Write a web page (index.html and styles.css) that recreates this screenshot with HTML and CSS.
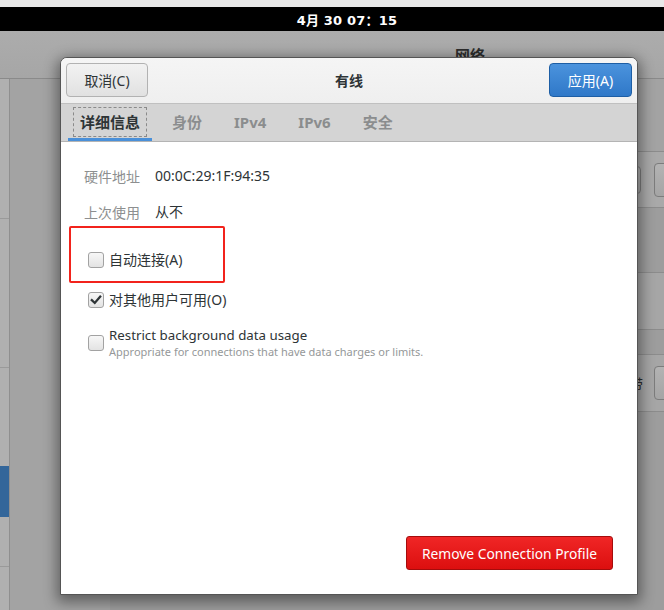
FILE: index.html
```html
<!DOCTYPE html>
<html lang="zh">
<head>
<meta charset="utf-8">
<title>有线</title>
<link rel="stylesheet" href="styles.css">
</head>
<body>
<div class="screen">
  <div class="topstrip"></div>
  <div class="topbar"><span class="clock">4月 30 07：15</span></div>
  <div class="bgwin">
    <div class="bg-header"><span class="bg-title">网络</span></div>
    <div class="bg-body">
      <div class="bg-sidebar">
        <div class="sb-row sb-1"></div>
        <div class="sb-row sb-2"></div>
        <div class="sb-row sb-3"></div>
        <div class="sb-row sb-sel"></div>
        <div class="sb-row sb-4"></div>
        <div class="sb-row sb-5"></div>
      </div>
      <div class="bg-main">
        <div class="bg-panel">
          <div class="mrow m-space"></div>
          <div class="mrow m-a">
            <span class="bg-btn bg-btn-hidden"></span>
            <span class="bg-btn bg-btn-edge"></span>
          </div>
          <div class="mrow m-b"></div>
          <div class="mrow m-c"></div>
          <div class="mrow m-d"></div>
          <div class="mrow m-e">
            <span class="bg-label">宽带</span>
            <span class="bg-btn bg-btn-edge"></span>
          </div>
          <div class="mrow m-f"></div>
        </div>
      </div>
    </div>
  </div>

  <div class="dialog">
    <div class="dlg-header">
      <button class="btn btn-cancel">取消(C)</button>
      <span class="dlg-title">有线</span>
      <button class="btn btn-apply">应用(A)</button>
    </div>
    <div class="tabs">
      <div class="tab active"><span class="tab-focus">详细信息</span></div>
      <div class="tab">身份</div>
      <div class="tab">IPv4</div>
      <div class="tab">IPv6</div>
      <div class="tab">安全</div>
    </div>
    <div class="content">
      <div class="info">
        <span class="info-label">硬件地址</span><span class="info-value">00:0C:29:1F:94:35</span>
        <span class="info-label">上次使用</span><span class="info-value">从不</span>
      </div>
      <div class="check check-1">
        <span class="cb"></span><span class="check-text">自动连接(A)</span>
      </div>
      <div class="check check-2">
        <span class="cb checked">
          <svg viewBox="0 0 16 16" width="14" height="14"><path d="M3.2 8.2 L6.6 11.4 L12.8 4.2" fill="none" stroke="#2e3436" stroke-width="2.6" stroke-linecap="square" stroke-linejoin="miter"/></svg>
        </span><span class="check-text">对其他用户可用(O)</span>
      </div>
      <div class="check check-3">
        <span class="cb"></span>
        <div class="check-stack">
          <span class="check-title">Restrict background data usage</span>
          <span class="check-sub">Appropriate for connections that have data charges or limits.</span>
        </div>
      </div>
      <div class="footer">
        <button class="btn btn-remove">Remove Connection Profile</button>
      </div>
    </div>
  </div>

  <div class="annot"></div>
</div>
</body>
</html>
```

FILE: styles.css
```css
* { box-sizing: border-box; }
html, body { margin: 0; padding: 0; }
body {
  width: 664px;
  height: 610px;
  overflow: hidden;
  background: #a2a2a2;
  font-family: "Noto Sans", "Noto Sans CJK SC", sans-serif;
  font-size: 14px;
  color: #2e3436;
}
.screen {
  position: relative;
  width: 664px;
  height: 610px;
  overflow: hidden;
  display: flex;
  flex-direction: column;
}
.topstrip { height: 7px; background: #e8e8e8; flex: none; }
.topbar {
  height: 24px;
  flex: none;
  background: #000;
  display: flex;
  align-items: center;
  justify-content: center;
}
.clock {
  color: #fff;
  font-family: "DejaVu Sans", "Noto Sans CJK SC", sans-serif;
  font-weight: bold;
  font-size: 13px;
  letter-spacing: 0.2px;
  padding-left: 30px;
}

/* background window (dimmed) */
.bgwin { flex: 1; display: flex; flex-direction: column; background: #a2a2a2; }
.bg-header {
  height: 48px;
  flex: none;
  background: linear-gradient(#acacac, #a6a6a6);
  border-bottom: 1px solid #8a8a8a;
  position: relative;
}
.bg-title {
  position: absolute;
  left: 455px;
  top: 13px;
  font-family: "Noto Sans CJK SC", sans-serif;
  font-weight: bold;
  font-size: 15px;
  color: #2c2c2c;
}
.bg-body { flex: 1; display: flex; }
.bg-sidebar {
  width: 10px;
  flex: none;
  background: #b0b0b0;
  border-right: 1px solid #8f8f8f;
  display: flex;
  flex-direction: column;
}
.sb-row { flex: none; border-bottom: 1px solid #9a9a9a; }
.sb-1 { height: 140px; }
.sb-2 { height: 149px; }
.sb-3 { height: 98px; border-bottom: none; }
.sb-sel { height: 51px; background: #33669a; border-bottom: none; }
.sb-4 { height: 50px; }
.sb-5 { flex: 1; border-bottom: none; }

.bg-main { flex: 1; display: flex; background: #a3a3a3; }
.bg-panel {
  flex: 1;
  margin-left: 100px;
  display: flex;
  flex-direction: column;
}
.mrow {
  flex: none;
  display: flex;
  align-items: center;
  justify-content: flex-end;
  border-bottom: 1px solid #8c8c8c;
}
.m-space { height: 73px; border-bottom: 1px solid #8c8c8c; }
.m-a { height: 56px; background: #a9a9a9; }
.m-b { height: 65px; background: #9d9d9d; }
.m-c { height: 57px; background: #a6a6a6; }
.m-d { height: 25px; background: #9d9d9d; }
.m-e { height: 57px; background: #a6a6a6; }
.m-f { flex: 1; border-bottom: none; background: #9d9d9d; }
.bg-btn {
  height: 34px;
  border: 1px solid #7c7c7c;
  border-radius: 4px;
  background: linear-gradient(#b3b3b3, #a5a5a5);
}
.bg-btn-hidden { width: 40px; height: 28px; margin-right: 13px; }
.bg-btn-edge { width: 40px; margin-right: -30px; }
.bg-label {
  font-family: "Noto Sans CJK SC", sans-serif;
  font-size: 14px;
  color: #2c2c2c;
  margin-right: 11px;
}

/* dialog */
.dialog {
  position: absolute;
  left: 60px;
  top: 57px;
  width: 578px;
  height: 538px;
  background: #fff;
  border: 1px solid #555;
  border-radius: 7px 7px 0 0;
  box-shadow: 0 4px 14px 3px rgba(0,0,0,0.42);
  display: flex;
  flex-direction: column;
  overflow: hidden;
}
.dlg-header {
  height: 46px;
  flex: none;
  padding: 5px 5px 0 5px;
  background: linear-gradient(#f5f5f5, #efefef);
  border-bottom: 1px solid #c0c0c0;
  display: flex;
  align-items: flex-start;
  justify-content: space-between;
  position: relative;
}
.dlg-title {
  position: absolute;
  left: 0; right: 0;
  top: 12px;
  text-align: center;
  font-family: "Noto Sans CJK SC", sans-serif;
  font-weight: bold;
  font-size: 14px;
  color: #2e3436;
  pointer-events: none;
}
.btn {
  font-family: "Noto Sans", "Noto Sans CJK SC", sans-serif;
  font-size: 14px;
  height: 34px;
  border-radius: 4px;
  padding: 0;
  cursor: default;
}
.btn-cancel {
  width: 82px;
  color: #2e3436;
  background: linear-gradient(#f2f2f2, #e1e1e1);
  border: 1px solid #b2b2b2;
}
.btn-apply {
  width: 83px;
  color: #fff;
  background: linear-gradient(#4b93dd, #2f78c8);
  border: 1px solid #1d5ea5;
}

.tabs {
  height: 38px;
  flex: none;
  background: #d4d4d4;
  border-bottom: 1px solid #b4b4b4;
  display: flex;
  padding-left: 3px;
}
.tab {
  position: relative;
  padding: 0 16px;
  display: flex;
  align-items: center;
  font-family: "Noto Sans", "Noto Sans CJK SC", sans-serif;
  font-weight: bold;
  font-size: 15px;
  color: #8b8d8e;
  height: 37px;
  padding-bottom: 2px;
}
.tab.active { padding: 0 14px 2px 14px; color: #2e3436; }
.tab.active::after {
  content: "";
  position: absolute;
  left: 4px; right: 4px; bottom: 0;
  height: 3px;
  background: #4a90d9;
}
.tab-focus {
  outline: 1px dashed #8a8a8a;
  outline-offset: 4px;
  padding: 0 2px;
  line-height: 20px;
}

.content {
  flex: 1;
  display: flex;
  flex-direction: column;
  padding: 24px 24px 24px 23px;
}
.info {
  display: grid;
  grid-template-columns: auto 1fr;
  column-gap: 15px;
  row-gap: 16px;
  line-height: 20px;
}
.info-label {
  font-family: "Noto Sans CJK SC", sans-serif;
  color: #8d8f90;
}
.info-value { color: #2e3436; }

.check {
  display: flex;
  align-items: center;
  gap: 5px;
  margin-left: 4px;
  line-height: 20px;
}
.check-1 { margin-top: 28px; }
.check-2 { margin-top: 20px; }
.check-3 { margin-top: 16px; }
.check-text { font-family: "Noto Sans", "Noto Sans CJK SC", sans-serif; }
.cb {
  width: 16px;
  height: 16px;
  flex: none;
  border: 1px solid #a2a2a2;
  border-radius: 3px;
  background: linear-gradient(#f7f7f7, #e3e3e3);
  display: flex;
  align-items: center;
  justify-content: center;
}
.check-stack { display: flex; flex-direction: column; }
.check-title { font-size: 13.3px; line-height: 18px; }
.check-sub { font-size: 11px; line-height: 16px; color: #959899; }

.footer {
  margin-top: auto;
  display: flex;
  justify-content: flex-end;
}
.btn-remove {
  width: 207px;
  font-size: 13.8px;
  color: #fff;
  background: linear-gradient(#f02626, #dc0f0f);
  border: 1px solid #a50c0c;
  border-radius: 3px;
}

.annot {
  position: absolute;
  left: 69px;
  top: 226px;
  width: 156px;
  height: 57px;
  border: 2px solid #f2231c;
  border-radius: 2px;
}
```
